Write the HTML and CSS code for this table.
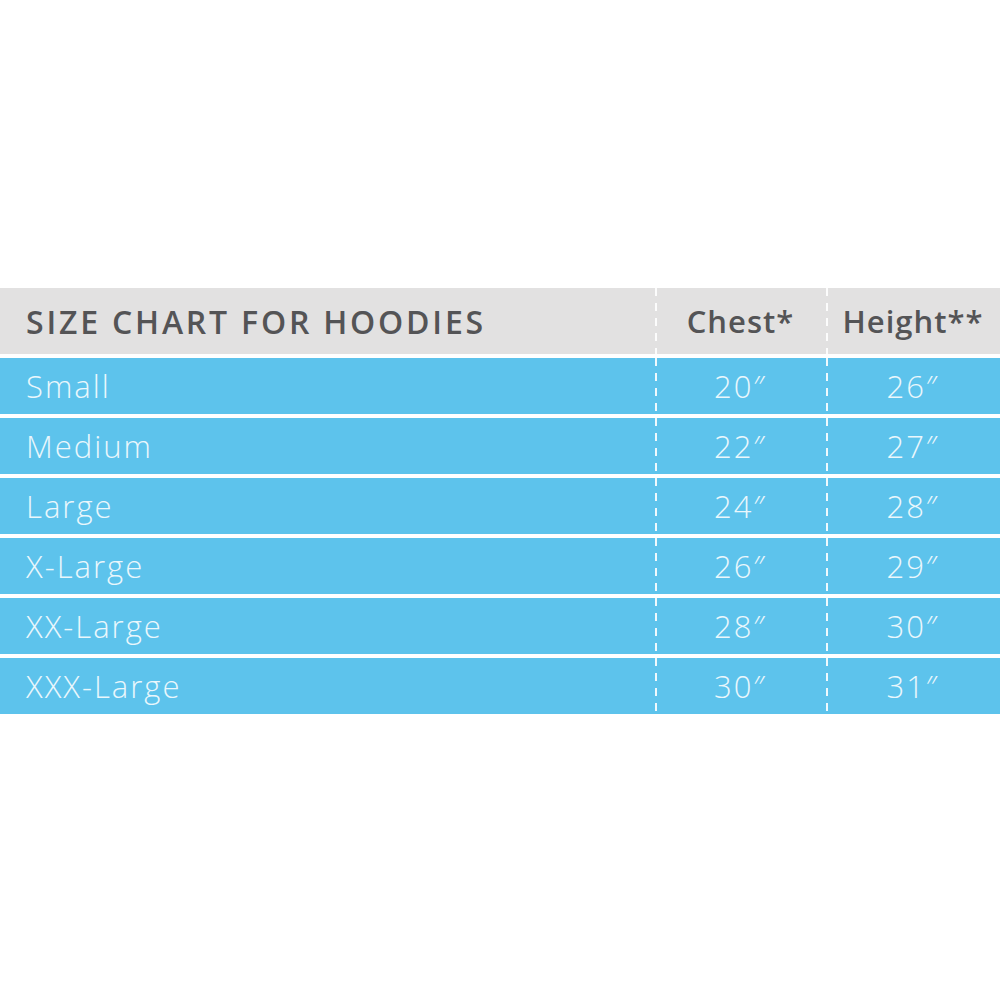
FILE: index.html
```html
<!DOCTYPE html>
<html lang="en">
<head>
<meta charset="utf-8">
<title>Size Chart for Hoodies</title>
<link rel="stylesheet" href="styles.css">
</head>
<body>
<div class="page">
  <div class="chart">
    <div class="row head">
      <div class="cell name">SIZE CHART FOR HOODIES</div>
      <div class="cell val dash">Chest*</div>
      <div class="cell val dash">Height**</div>
    </div>
    <div class="row">
      <div class="cell name">Small</div>
      <div class="cell val dash">20″</div>
      <div class="cell val dash">26″</div>
    </div>
    <div class="row">
      <div class="cell name">Medium</div>
      <div class="cell val dash">22″</div>
      <div class="cell val dash">27″</div>
    </div>
    <div class="row">
      <div class="cell name">Large</div>
      <div class="cell val dash">24″</div>
      <div class="cell val dash">28″</div>
    </div>
    <div class="row">
      <div class="cell name">X-Large</div>
      <div class="cell val dash">26″</div>
      <div class="cell val dash">29″</div>
    </div>
    <div class="row">
      <div class="cell name">XX-Large</div>
      <div class="cell val dash">28″</div>
      <div class="cell val dash">30″</div>
    </div>
    <div class="row">
      <div class="cell name">XXX-Large</div>
      <div class="cell val dash">30″</div>
      <div class="cell val dash">31″</div>
    </div>
  </div>
</div>
</body>
</html>
```

FILE: styles.css
```css
html, body {
  margin: 0;
  padding: 0;
  background: #ffffff;
}

.page {
  width: 1000px;
  height: 1000px;
  padding-top: 288px;
  box-sizing: border-box;
}

.chart {
  display: flex;
  flex-direction: column;
  gap: 4px;
  font-family: "Open Sans", "Liberation Sans", sans-serif;
}

.row {
  display: grid;
  grid-template-columns: 655px 171px 174px;
  height: 56px;
  background: #5dc3ec;
  color: #eaf7fc;
  font-size: 31px;
  font-weight: 300;
  letter-spacing: 2px;
}

.row.head {
  height: 66px;
  background: #e2e1e1;
  color: #545456;
  font-weight: 600;
  font-size: 31px;
  letter-spacing: 1px;
}

.cell {
  display: flex;
  align-items: center;
  white-space: nowrap;
}

.name {
  padding-left: 26px;
}

.head .name {
  font-size: 32px;
  letter-spacing: 2.8px;
}

.val {
  justify-content: center;
}

.dash {
  background-image: repeating-linear-gradient(to bottom, rgba(255,255,255,0.9) 0 8px, transparent 8px 15px);
  background-size: 2px 100%;
  background-repeat: no-repeat;
  background-position: 0 0;
}
```
